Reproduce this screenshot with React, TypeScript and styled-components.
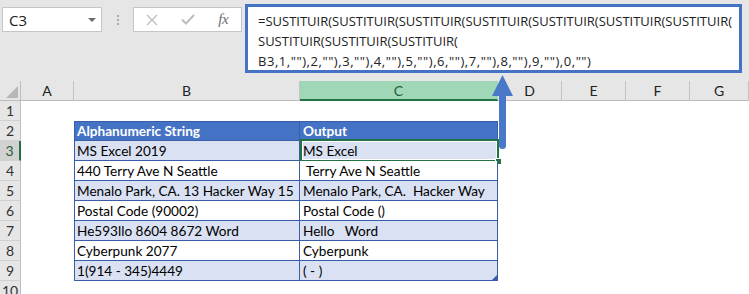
import React from "react";
import styled, { createGlobalStyle } from "styled-components";

const Global = createGlobalStyle`
  html, body { margin: 0; padding: 0; background: #fff; }
  body { width: 749px; height: 294px; overflow: hidden; font-family: Lato, "Liberation Sans", sans-serif; }
  * { box-sizing: border-box; }
`;

const Page = styled.div`
  position: relative;
  width: 749px;
  height: 294px;
  overflow: hidden;
  background: #fff;
`;

const TopBar = styled.div`
  height: 81px;
  background: #e6e6e6;
  display: flex;
  align-items: flex-start;
  padding-left: 2px;
`;

const NameBox = styled.div`
  margin-top: 7px;
  width: 100px;
  height: 25px;
  border: 1px solid #c6c6c6;
  background: #fff;
  display: flex;
  align-items: center;
  justify-content: space-between;
  padding: 0 5px 0 6px;
  font-family: "Open Sans", "Liberation Sans", sans-serif;
  font-size: 15px;
  color: #222;
`;

const DropTri = styled.span`
  width: 0;
  height: 0;
  border-left: 4px solid transparent;
  border-right: 4px solid transparent;
  border-top: 4px solid #6b6b6b;
`;

const Dots = styled.div`
  width: 31px;
  height: 39px;
  display: flex;
  flex-direction: column;
  align-items: center;
  justify-content: center;
  gap: 2px;
`;

const Dot = styled.span`
  width: 2px;
  height: 2px;
  background: #a9a9a9;
`;

const FxBox = styled.div`
  margin-top: 7px;
  width: 109px;
  height: 25px;
  border: 1px solid #c6c6c6;
  background: #fff;
  display: flex;
`;

const FxSlot = styled.div`
  width: 36px;
  height: 100%;
  display: flex;
  align-items: center;
  justify-content: center;
`;

const FxText = styled.span`
  font-family: "Liberation Serif", "DejaVu Serif", serif;
  font-style: italic;
  font-size: 15px;
  color: #6e6e6e;
  letter-spacing: -0.5px;
`;

const FormulaBox = styled.div`
  margin-top: 4px;
  margin-left: 3px;
  width: 497px;
  height: 69px;
  border: 3px solid #4472c4;
  background: #fff;
  padding: 4px 0 0 10px;
  font-family: "Open Sans", "Liberation Sans", sans-serif;
  font-size: 13px;
  line-height: 20px;
  color: #222;
  white-space: pre;
`;

const FormulaLine = styled.div<{ $spacing?: number }>`
  letter-spacing: ${(p) => p.$spacing ?? 0}px;
`;

const HeaderRow = styled.div`
  display: flex;
  height: 20px;
  background: #e6e6e6;
`;

const Corner = styled.div`
  position: relative;
  width: 21px;
  height: 20px;
  border-right: 1px solid #bdbdbd;
  border-bottom: 1px solid #bdbdbd;
`;

const CornerTri = styled.span`
  position: absolute;
  right: 2px;
  bottom: 2px;
  width: 0;
  height: 0;
  border-left: 12px solid transparent;
  border-bottom: 12px solid #b7b7b7;
`;

const ColHead = styled.div<{ $w: number; $sel?: boolean }>`
  width: ${(p) => p.$w}px;
  height: 20px;
  display: flex;
  align-items: center;
  justify-content: center;
  font-size: 14px;
  color: ${(p) => (p.$sel ? "#1d5e37" : "#222")};
  background: ${(p) => (p.$sel ? "#a0d7b6" : "transparent")};
  border-right: 1px solid ${(p) => (p.$sel ? "#a0d7b6" : "#c4c4c4")};
  border-bottom: ${(p) => (p.$sel ? "2px solid #217346" : "1px solid #bdbdbd")};
  padding-top: ${(p) => (p.$sel ? "1px" : "0")};
`;

const Row = styled.div`
  display: flex;
  height: 20px;
`;

const RowNum = styled.div<{ $sel?: boolean }>`
  width: 21px;
  height: 20px;
  display: flex;
  align-items: center;
  justify-content: center;
  font-size: 14px;
  color: ${(p) => (p.$sel ? "#1d5e37" : "#333")};
  background: ${(p) => (p.$sel ? "#d2d2d2" : "#e6e6e6")};
  border-right: ${(p) => (p.$sel ? "2px solid #217346" : "1px solid #bdbdbd")};
  border-bottom: 1px solid #d0d0d0;
`;

const Cell = styled.div<{ $w: number }>`
  width: ${(p) => p.$w}px;
  height: 20px;
`;

type Variant = "head" | "odd" | "even";

const TableCell = styled.div<{ $w: number; $v: Variant; $first?: boolean }>`
  position: relative;
  width: ${(p) => p.$w}px;
  height: 20px;
  display: flex;
  align-items: center;
  padding-left: ${(p) => (p.$first ? "2px" : "3px")};
  white-space: pre;
  font-size: 13.6px;
  font-weight: ${(p) => (p.$v === "head" ? 700 : 400)};
  color: ${(p) => (p.$v === "head" ? "#fff" : "#000")};
  background: ${(p) => (p.$v === "head" ? "#4472c4" : p.$v === "odd" ? "#d9e1f2" : "#fff")};
  border-right: 1px solid #3a5ea6;
  border-bottom: 1px solid #3a5ea6;
  border-left: ${(p) => (p.$first ? "1px solid #3a5ea6" : "none")};
  border-top: ${(p) => (p.$v === "head" ? "1px solid #3a5ea6" : "none")};
`;

const Selection = styled.div`
  position: absolute;
  left: 0;
  top: -2px;
  right: -2px;
  bottom: -2px;
  border: 2px solid #217346;
  box-shadow: inset 0 0 0 1px #fff;
  pointer-events: none;
`;

const FillHandle = styled.span`
  position: absolute;
  right: -5px;
  bottom: -5px;
  width: 7px;
  height: 7px;
  background: #217346;
  border: 1px solid #fff;
`;

const ResizeHandle = styled.span`
  position: absolute;
  right: 0;
  bottom: 0;
  width: 0;
  height: 0;
  border-left: 5px solid transparent;
  border-bottom: 5px solid #3a5ea6;
`;

const Arrow = styled.svg`
  position: absolute;
  left: 490px;
  top: 74px;
`;

const cols = [
  { l: "A", w: 53 },
  { l: "B", w: 226 },
  { l: "C", w: 198 },
  { l: "D", w: 64 },
  { l: "E", w: 64 },
  { l: "F", w: 64 },
  { l: "G", w: 59 },
];

const data: [string, string][] = [
  ["Alphanumeric String", "Output"],
  ["MS Excel 2019", "MS Excel "],
  ["440 Terry Ave N Seattle", " Terry Ave N Seattle"],
  ["Menalo Park, CA. 13 Hacker Way 15", "Menalo Park, CA.  Hacker Way "],
  ["Postal Code (90002)", "Postal Code ()"],
  ["He593llo 8604 8672 Word", "Hello   Word"],
  ["Cyberpunk 2077", "Cyberpunk "],
  ["1(914 - 345)4449", "( - )"],
];

const formula: { text: string; spacing?: number }[] = [
  { text: "=SUSTITUIR(SUSTITUIR(SUSTITUIR(SUSTITUIR(SUSTITUIR(SUSTITUIR(SUSTITUIR(" },
  { text: "SUSTITUIR(SUSTITUIR(SUSTITUIR(" },
  { text: 'B3,1,""),2,""),3,""),4,""),5,""),6,""),7,""),8,""),9,""),0,"")', spacing: 0.55 },
];

export default function App() {
  const rows = Array.from({ length: 10 }, (_, i) => i + 1);
  return (
    <Page>
      <Global />
      <TopBar>
        <NameBox>
          <span>C3</span>
          <DropTri />
        </NameBox>
        <Dots>
          <Dot />
          <Dot />
          <Dot />
        </Dots>
        <FxBox>
          <FxSlot>
            <svg width="12" height="12" viewBox="0 0 12 12">
              <path d="M1 1 L11 11 M11 1 L1 11" stroke="#bdbdbd" strokeWidth="1.3" fill="none" />
            </svg>
          </FxSlot>
          <FxSlot>
            <svg width="14" height="11" viewBox="0 0 14 11">
              <path d="M1 5.5 L5 9.5 L13 1" stroke="#bdbdbd" strokeWidth="2" fill="none" />
            </svg>
          </FxSlot>
          <FxSlot>
            <FxText>fx</FxText>
          </FxSlot>
        </FxBox>
        <FormulaBox>
          {formula.map((f, i) => (
            <FormulaLine key={i} $spacing={f.spacing}>
              {f.text}
            </FormulaLine>
          ))}
        </FormulaBox>
      </TopBar>
      <HeaderRow>
        <Corner>
          <CornerTri />
        </Corner>
        {cols.map((c) => (
          <ColHead key={c.l} $w={c.w} $sel={c.l === "C"}>
            {c.l}
          </ColHead>
        ))}
      </HeaderRow>
      {rows.map((r) => {
        const d = r >= 2 && r <= 9 ? data[r - 2] : null;
        const v: Variant = r === 2 ? "head" : r % 2 === 1 ? "odd" : "even";
        return (
          <Row key={r}>
            <RowNum $sel={r === 3}>{r}</RowNum>
            <Cell $w={53} />
            {d ? (
              <>
                <TableCell $w={226} $v={v} $first>
                  {d[0]}
                </TableCell>
                <TableCell $w={198} $v={v}>
                  {d[1]}
                  {r === 3 && (
                    <Selection>
                      <FillHandle />
                    </Selection>
                  )}
                  {r === 9 && <ResizeHandle />}
                </TableCell>
              </>
            ) : (
              <>
                <Cell $w={226} />
                <Cell $w={198} />
              </>
            )}
            <Cell $w={64} />
            <Cell $w={64} />
            <Cell $w={64} />
            <Cell $w={59} />
          </Row>
        );
      })}
      <Arrow width="26" height="78" viewBox="0 0 26 78">
        <path d="M12.5 1 L23 22 L16 22 L16 71.5 Q16 75 12.5 75 Q9 75 9 71.5 L9 22 L2 22 Z" fill="#4a78c8" />
      </Arrow>
    </Page>
  );
}
